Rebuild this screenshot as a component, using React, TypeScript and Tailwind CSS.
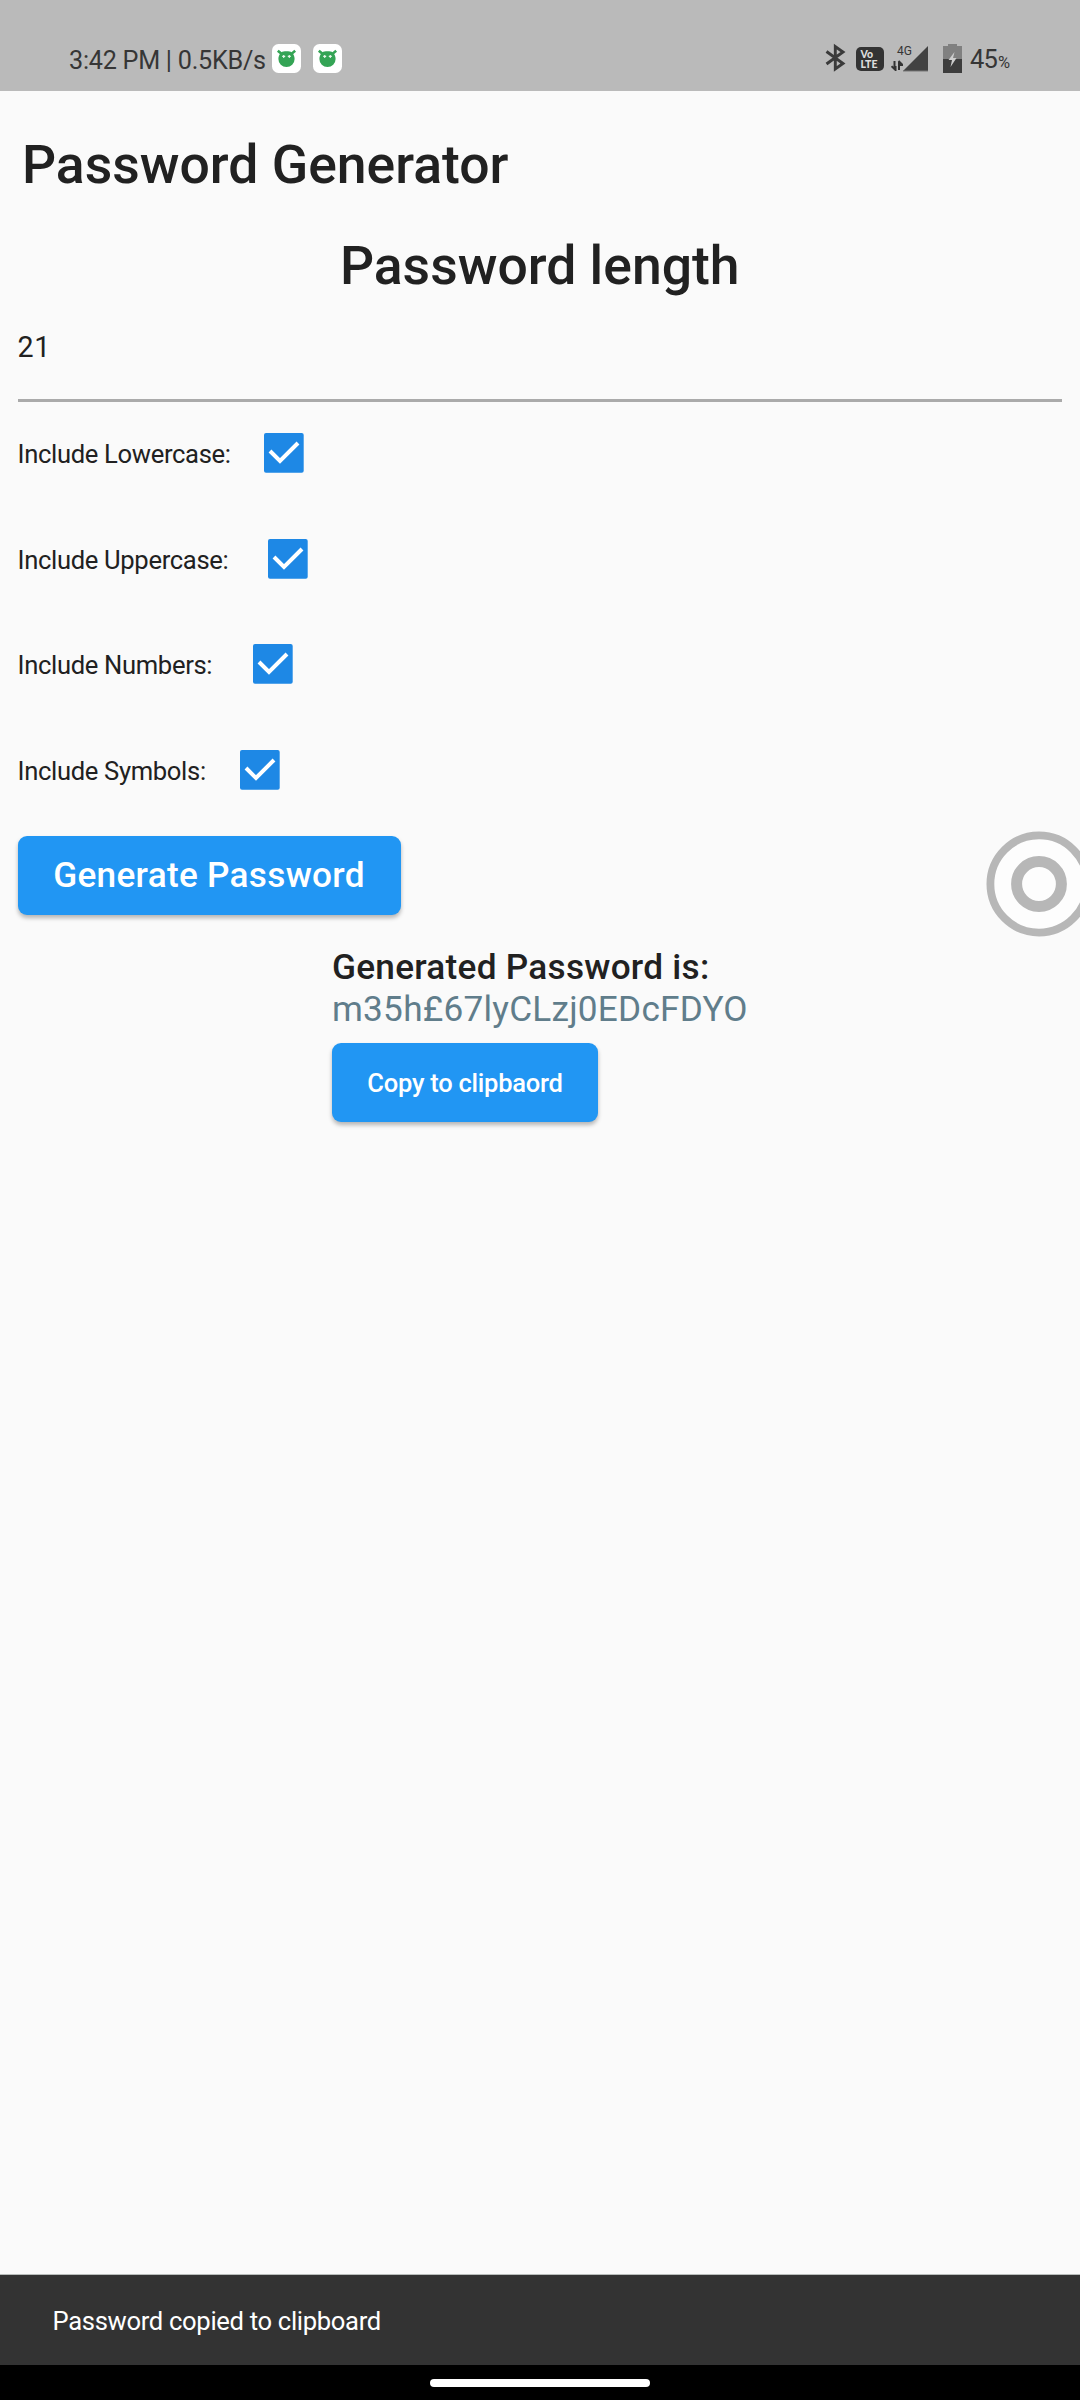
function MascotIcon() {
  return (
    <svg width="29" height="29" viewBox="0 0 29 29" className="shrink-0">
      <rect width="29" height="29" rx="6.5" fill="#fff" />
      <path d="M6.8 7.6 10.4 10.6M22.2 7.6 18.6 10.6" stroke="#34a455" strokeWidth="2.6" strokeLinecap="square" />
      <path d="M9.4 8.4C11 7 18 7 19.6 8.4 21.8 10 22.6 12.5 22.6 14.9A8.1 8.1 0 0 1 6.4 14.9C6.4 12.5 7.2 10 9.4 8.4Z" fill="#34a455" />
      <path d="M10.2 12.4h3M11.7 10.9v3M15.8 12.4h3M17.3 10.9v3" stroke="#e8f6ec" strokeWidth="1.1" />
    </svg>
  );
}

function StatusBar() {
  return (
    <div className="flex h-[91px] shrink-0 items-start bg-[#bababa] pl-[69px] text-[#363636]">
      <div className="flex w-[756px] pt-[44px]">
        <span className="h-[29px] w-[203px] text-[25.2px] leading-[33px] font-normal tracking-[-0.26px] whitespace-nowrap">
          3:42 PM | 0.5KB/s
        </span>
        <div className="flex gap-3">
          <MascotIcon />
          <MascotIcon />
        </div>
      </div>
      <svg width="21" height="30" viewBox="0 0 21 30" className="mt-[43px] shrink-0">
        <path d="M1.5 8.5 18 20.5 10.3 26V3.5L18 9 1.5 21" fill="none" stroke="#3a3a3a" strokeWidth="2.9" />
      </svg>
      <div className="mt-[47px] ml-[10px] flex h-6 w-7 shrink-0 flex-col rounded-[5px] bg-[#333] pt-[3px] pl-[4.5px] font-[Lato] text-[10.5px] font-black text-[#dcdcdc]">
        <span className="h-[9px] leading-[9px]">Vo</span>
        <span className="h-[10px] leading-[10px]">LTE</span>
      </div>
      <div className="mt-[45px] ml-[7px] flex w-[38px] shrink-0">
        <div className="flex w-3 flex-col">
          <span className="h-[15px] w-5 pl-[6px] text-[12px] leading-[13px] whitespace-nowrap">4G</span>
          <svg width="12" height="11" viewBox="0 0 12 11">
            <path d="M3.5 1V9M0.5 6.2 4.5 10V6M8 10V2M7.5 1 11.5 5H8" fill="none" stroke="#333" strokeWidth="2" />
          </svg>
        </div>
        <svg width="26" height="27" viewBox="0 0 26 27">
          <path d="M25 1V26H0Z" fill="#424242" />
          <path d="M0 26H25" stroke="#777" strokeWidth="1" />
        </svg>
      </div>
      <svg width="19" height="29" viewBox="0 0 19 29" className="mt-11 ml-[14px] shrink-0">
        <path d="M5 0H14V2H19V15H0V2H5Z" fill="#808080" />
        <path d="M0 15H19V29H0Z" fill="#3d3d3d" />
        <path d="M11.5 8 5.5 16H9L7.5 23 13.5 14H10Z" fill="#cdcdcd" />
      </svg>
      <div className="ml-[8px] flex pt-[43px] font-normal">
        <span className="w-[28px] text-[25.5px] leading-[33px] tracking-[-0.8px]">45</span>
        <span className="pt-[3px] text-[16.5px] leading-[33px]">%</span>
      </div>
    </div>
  );
}

const options = [
  { label: "Include Lowercase:", width: "w-[246.5px]" },
  { label: "Include Uppercase:", width: "w-[250.8px]" },
  { label: "Include Numbers:", width: "w-[235.5px]" },
  { label: "Include Symbols:", width: "w-[222.5px]" },
];

function CheckRow({ label, width }: { label: string; width: string }) {
  return (
    <label className="flex h-[105.6px] items-center">
      <span className={`${width} pt-[2px] text-[25.6px] leading-[30px] tracking-[-0.33px]`}>{label}</span>
      <svg width="40" height="40" viewBox="0 0 40 40">
        <rect width="39.7" height="39.7" rx="2" fill="#1e88e5" />
        <path d="M6 18 16 28 34 10" fill="none" stroke="#fff" strokeWidth="4" />
      </svg>
    </label>
  );
}

const buttonStyle =
  "flex h-[79px] items-center justify-center rounded-[9px] bg-[#2196f3] font-medium text-white shadow-[0_3px_4px_rgba(0,0,0,0.28)]";

export default function App() {
  return (
    <div className="relative flex h-[2400px] w-[1080px] flex-col overflow-hidden bg-[#fafafa] font-[Roboto,sans-serif] text-[#212121]">
      <StatusBar />
      <header className="flex h-[147px] shrink-0 items-center pl-[22px]">
        <h1 className="text-[53.5px] leading-[62px] font-medium">Password Generator</h1>
      </header>
      <main className="flex grow flex-col pr-[18px] pl-[17.5px]">
        <h2 className="h-[55px] text-center text-[53.5px] leading-[55px] font-medium">Password length</h2>
        <div className="h-[108.5px] border-b-[3px] border-[#aaa] pt-[36px] text-[28.6px] leading-[37px] tracking-[0.7px]">
          21
        </div>
        <div className="-mt-px flex flex-col">
          {options.map((o) => (
            <CheckRow key={o.label} label={o.label} width={o.width} />
          ))}
        </div>
        <button className={`${buttonStyle} mt-[13px] w-[383px] pt-px text-[35.2px] tracking-[0.28px]`}>
          Generate Password
        </button>
        <section className="ml-[314.5px] flex flex-col items-start pt-[31px]">
          <p className="text-[35.2px] leading-[42px] font-medium tracking-[0.26px]">Generated Password is:</p>
          <p className="text-[35.2px] leading-[42px] tracking-[0.24px] text-[#607d8b]">m35h£67lyCLzj0EDcFDYO</p>
          <button className={`${buttonStyle} mt-[13px] w-[266px] pt-px text-[25.5px] tracking-[-0.24px]`}>
            Copy to clipbaord
          </button>
        </section>
      </main>
      <svg width="106" height="106" viewBox="0 0 106 106" className="absolute top-[830.5px] left-[985.5px]">
        <circle cx="53" cy="53" r="48.6" fill="#fdfdfd" stroke="#b7b7b7" strokeWidth="7.8" />
        <circle cx="53" cy="53" r="22.4" fill="#fdfdfd" stroke="#b7b7b7" strokeWidth="11" />
      </svg>
      <div className="flex h-[91px] shrink-0 items-center border-t border-[#b9bdbb] bg-[#333] pt-[2px] pl-[52.5px] text-[25.6px] tracking-[-0.32px] text-white">
        Password copied to clipboard
      </div>
      <div className="flex h-[35px] shrink-0 justify-center bg-black pt-[14px]">
        <div className="h-2 w-[220px] rounded-full bg-white" />
      </div>
    </div>
  );
}
